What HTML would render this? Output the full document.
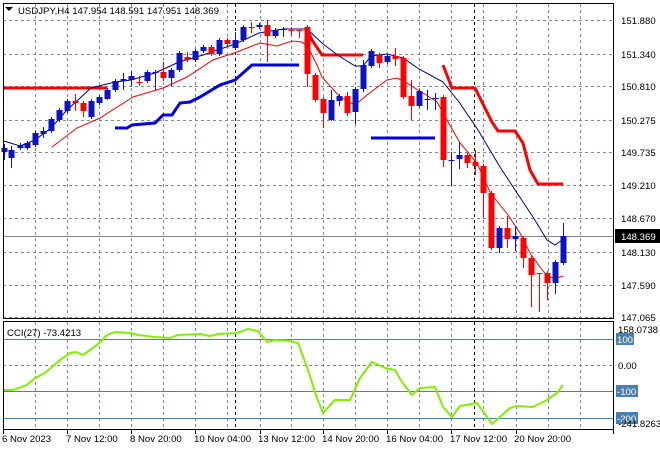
<!DOCTYPE html><html><head><style>
body{margin:0;background:#fff;width:660px;height:450px;overflow:hidden;font-family:"Liberation Sans",sans-serif}
svg text{font-family:"Liberation Sans",sans-serif;font-size:9.6px;fill:#000}
</style></head><body>
<svg width="660" height="450" viewBox="0 0 660 450" xmlns="http://www.w3.org/2000/svg">
<g stroke="#7d8a99" stroke-dasharray="3,3" stroke-width="1" fill="none">
<path d="M3,20.5H613M3,54.5H613M3,86.5H613M3,120.5H613M3,152.5H613M3,185.5H613M3,218.5H613M3,252.5H613M3,285.5H613M3,317.5H613M3,365.5H613"/>
<path d="M35.5,4V318M67.5,4V318M99.5,4V318M131.5,4V318M163.5,4V318M195.5,4V318M227.5,4V318M260.5,4V318M291.5,4V318M323.5,4V318M355.5,4V318M387.5,4V318M419.5,4V318M451.5,4V318M483.5,4V318M516.5,4V318M548.5,4V318M580.5,4V318"/>
<path d="M35.5,322V429M67.5,322V429M99.5,322V429M131.5,322V429M163.5,322V429M195.5,322V429M227.5,322V429M260.5,322V429M291.5,322V429M323.5,322V429M355.5,322V429M387.5,322V429M419.5,322V429M451.5,322V429M483.5,322V429M516.5,322V429M548.5,322V429M580.5,322V429"/>
</g>
<g stroke="#000" stroke-dasharray="3,3" fill="none"><path d="M235.5,4V429M474.5,4V429"/></g>
<path d="M3,236.5H613" stroke="#7d8a99"/>
<g stroke="#4a7fb0" fill="none"><path d="M3,339.5H613M3,391.5H613M3,418.5H613"/></g>
<polyline fill="none" stroke="#f00" stroke-width="3" points="4,88 107,88"/>
<polyline fill="none" stroke="#f00" stroke-width="3" points="306,27 312,40 322,55 363,55"/>
<polyline fill="none" stroke="#f00" stroke-width="3" points="443,65 452,88 475,88 492,122 498,131 515,131 523,143 530,170 538,184 563,184"/>
<polyline fill="none" stroke="#0000e0" stroke-width="3" points="115,128 127,128 132,125 155,123 163,115 172,115 180,103 190,102 200,97 220,85 235,80 252,65 299,65"/>
<polyline fill="none" stroke="#0000e0" stroke-width="3" points="371,138 435,138"/>
<polyline fill="none" stroke="#000080" stroke-width="1" points="4,141 20,146 35,140 51,128 67,110 91,88 115,82 131,80 155,73 179,62 203,55 235,44 259,33 283,29 307,29 323,44 339,56 355,66 363,66 371,56 387,54 403,58 419,69 443,82 459,102 478,130 500,167 517,193 533,217 547,240 555,245 562,240"/>
<polyline fill="none" stroke="#f00" stroke-width="1" points="52,147 77,128 100,118 133,97 163,88 187,77 213,60 237,52 260,43 277,46 292,41 302,42 308,47 317,65 322,77 340,97 355,105 367,95 387,80 397,78 405,82 423,93 437,102 447,120 460,143 477,163 490,192 500,205 508,215 520,233 530,253 540,267 548,277 557,278 563,276"/>
<g id="c"></g>
<polyline fill="none" stroke="#80f000" stroke-width="2" points="3,390 13,390 27,385 35,378 45,373 60,360 70,353 76,352 83,355 97,345 107,335 115,332 130,333 138,335 155,337 170,338 178,335 200,334 210,336 218,334 237,333 248,329 258,331 267,342 275,340 290,341 298,343 308,370 316,395 323,413 335,400 350,400 360,378 372,362 385,368 395,370 402,382 412,395 420,388 435,387 443,407 452,417 460,406 477,403 492,424 510,408 517,406 533,407 547,400 557,393 563,385"/>
<rect x="3.5" y="3.5" width="610" height="315" fill="none" stroke="#000"/>
<rect x="3.5" y="321.5" width="610" height="108" fill="none" stroke="#000"/>
<path d="M5,7l4,4 4,-4z" fill="#000"/>
<text x="18" y="14">USDJPY,H4  147.954 148.591 147.951 148.369</text>
<text x="7" y="336">CCI(27) -73.4213</text>
<g>
<text x="621" y="24">151.880</text><text x="621" y="58">151.340</text><text x="621" y="90">150.810</text><text x="621" y="124">150.275</text><text x="621" y="156">149.735</text><text x="621" y="189">149.210</text><text x="621" y="222">148.670</text><text x="621" y="256">148.130</text><text x="621" y="289">147.590</text><text x="621" y="321">147.065</text>
</g>
<rect x="615" y="229" width="45" height="14" fill="#000"/><text x="621" y="240" style="fill:#fff">148.369</text>
<text x="618" y="333">158.0738</text>
<rect x="616" y="333" width="18" height="12" fill="#4a7fb0"/><text x="617" y="343" style="fill:#fff">100</text>
<text x="618" y="369">0.00</text>
<rect x="616" y="385" width="22" height="12" fill="#4a7fb0"/><text x="617" y="395" style="fill:#fff">-100</text>
<rect x="616" y="412" width="22" height="12" fill="#4a7fb0"/><text x="617" y="422" style="fill:#fff">-200</text>
<text x="618" y="427">-241.8263</text>
<g stroke="#000"><path d="M3.5,430v4M67.5,430v4M131.5,430v4M195.5,430v4M260.5,430v4M323.5,430v4M387.5,430v4M451.5,430v4M516.5,430v4M613.5,430v4"/></g>
<text x="2" y="442">6 Nov 2023</text><text x="66" y="442">7 Nov 12:00</text><text x="130" y="442">8 Nov 20:00</text><text x="194" y="442">10 Nov 04:00</text><text x="258" y="442">13 Nov 12:00</text><text x="322" y="442">14 Nov 20:00</text><text x="386" y="442">16 Nov 04:00</text><text x="450" y="442">17 Nov 12:00</text><text x="514" y="442">20 Nov 20:00</text>
</svg>
<script>
var d=[[4,148,152,144,160,'b'],[11,150,158,146,168,'b'],[20,145,148,143,150,'b'],[27,143,148,141,150,'b'],[35,133,145,131,147,'b'],[43,131,134,127,138,'b'],[51,119,131,117,133,'b'],[59,110,120,108,122,'b'],[67,101,111,99,113,'b'],[75,101,103,94,111,'r'],[83,103,111,101,117,'r'],[91,101,117,99,119,'b'],[99,97,103,95,105,'b'],[107,90,99,88,100,'b'],[115,81,90,79,92,'b'],[123,79,81,73,90,'b'],[131,76,80,71,86,'b'],[139,82,83,76,86,'r'],[147,72,81,70,83,'b'],[155,72,73,70,90,'b'],[163,72,78,62,81,'r'],[171,70,78,68,86,'b'],[179,53,70,51,72,'b'],[187,57,60,52,62,'r'],[195,51,60,49,62,'b'],[203,47,51,45,53,'b'],[211,47,54,45,56,'r'],[219,40,54,38,56,'b'],[227,40,44,38,46,'r'],[235,40,48,32,50,'b'],[243,27,40,25,42,'b'],[251,27,28,22,33,'r'],[259,25,27,23,29,'b'],[267,25,36,20,62,'r'],[275,30,36,28,38,'b'],[283,29,30,27,37,'b'],[291,30,31,27,36,'r'],[299,30,31,30,38,'r'],[307,27,74,25,87,'r'],[315,75,100,73,102,'r'],[323,99,113,97,128,'r'],[331,100,120,90,121,'b'],[339,96,101,94,106,'b'],[347,96,113,92,116,'r'],[355,89,112,87,124,'b'],[363,65,89,60,92,'b'],[371,51,66,49,68,'b'],[379,55,63,53,68,'r'],[387,56,62,54,64,'b'],[395,56,59,48,66,'r'],[403,58,97,56,99,'r'],[411,96,106,80,120,'r'],[419,91,106,89,108,'b'],[427,99,100,90,110,'b'],[435,98,99,93,110,'b'],[443,97,160,95,167,'r'],[451,160,161,152,186,'b'],[459,155,159,143,169,'b'],[467,155,163,153,168,'r'],[475,162,166,150,175,'r'],[483,166,193,164,218,'r'],[491,193,248,191,250,'r'],[499,228,248,226,253,'b'],[507,228,239,216,248,'r'],[515,236,239,227,251,'b'],[523,238,258,236,268,'r'],[531,258,275,256,307,'r'],[539,273,274,273,312,'r'],[547,273,283,271,300,'r'],[555,262,283,260,294,'b'],[563,236,263,223,265,'b']];
var s='';d.forEach(function(c){var col=c[5]=='b'?'#0a14c0':'#f00';var h=Math.max(1,c[2]-c[1]);s+='<line x1="'+(c[0]+.5)+'" x2="'+(c[0]+.5)+'" y1="'+c[3]+'" y2="'+c[4]+'" stroke="'+col+'"/>';s+='<rect x="'+(c[0]-2.5)+'" y="'+c[1]+'" width="6" height="'+h+'" fill="'+col+'"/>';});
document.getElementById('c').innerHTML=s;
</script>
</body></html>
